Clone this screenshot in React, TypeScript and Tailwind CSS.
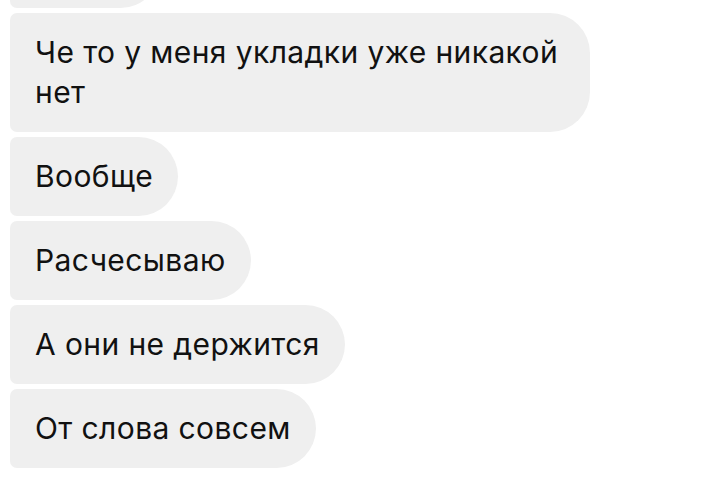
const messages = [
  'Че то у меня укладки уже никакой нет',
  'Вообще',
  'Расчесываю',
  'А они не держится',
  'От слова совсем',
];

function Bubble({ text }: { text: string }) {
  return (
    <div className="max-w-[580px] rounded-l-[7px] rounded-r-[40px] bg-[#efefef] px-[25px] pt-[19px] pb-[20px] text-[30px] leading-[40px] tracking-[0.4px] text-[#111111]">
      {text}
    </div>
  );
}

export default function App() {
  return (
    <div className="h-[484px] w-[726px] overflow-hidden bg-white font-['Inter',_'Liberation_Sans',_sans-serif]">
      <div className="flex flex-col items-start gap-[5px] pl-[10px]">
        {/* previous message, cut off by the top edge */}
        <div className="-mt-[71px] h-[79px] w-[150px] rounded-l-[7px] rounded-r-[40px] bg-[#efefef]" />
        {messages.map((m) => (
          <Bubble key={m} text={m} />
        ))}
      </div>
    </div>
  );
}
